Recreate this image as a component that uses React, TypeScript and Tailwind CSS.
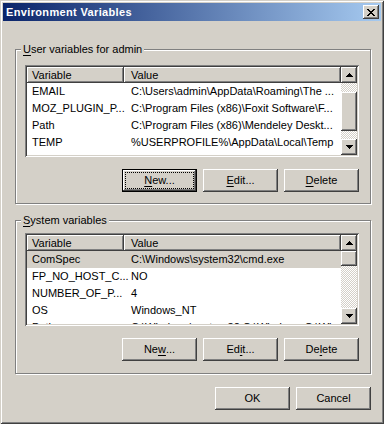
import React from "react";

const raised =
  "bg-[#d4d0c8] shadow-[inset_-1px_-1px_#404040,inset_1px_1px_#ffffff,inset_-2px_-2px_#808080,inset_2px_2px_#d4d0c8]";
const sunken =
  "shadow-[inset_1px_1px_#808080,inset_-1px_-1px_#ffffff,inset_2px_2px_#404040,inset_-2px_-2px_#d4d0c8]";
const etched = "border border-[#808080] shadow-[inset_1px_1px_#ffffff,1px_1px_#ffffff]";
const checker =
  "bg-[image:repeating-conic-gradient(#d4d0c8_0%_25%,#ffffff_0%_50%)] bg-[length:2px_2px]";

function Key({ children }: { children: React.ReactNode }) {
  return <span className="underline underline-offset-[2px]">{children}</span>;
}

function CloseGlyph() {
  const rows = ["11000011", "01100110", "00111100", "00011000", "00111100", "01100110", "11000011"];
  return (
    <svg width="8" height="7" viewBox="0 0 8 7" shapeRendering="crispEdges">
      {rows.flatMap((r, y) =>
        r.split("").map((c, x) => (c === "1" ? <rect key={`${x}-${y}`} x={x} y={y} width="1" height="1" fill="#000" /> : null))
      )}
    </svg>
  );
}

function Arrow({ down }: { down?: boolean }) {
  return (
    <svg width="7" height="4" viewBox="0 0 7 4" shapeRendering="crispEdges">
      <polygon points={down ? "0,0 7,0 3.5,4" : "3.5,0 7,4 0,4"} fill="#000" />
    </svg>
  );
}

function ScrollBar({ before, thumb }: { before: number; thumb: number }) {
  return (
    <div className="flex w-[16px] flex-col">
      <div className={`${raised} flex h-[16px] shrink-0 items-center justify-center`}>
        <Arrow />
      </div>
      <div className={`flex flex-1 flex-col ${checker}`}>
        <div className="shrink-0" style={{ height: before }} />
        <div className={`${raised} shrink-0`} style={{ height: thumb }} />
      </div>
      <div className={`${raised} flex h-[16px] shrink-0 items-center justify-center`}>
        <Arrow down />
      </div>
    </div>
  );
}

type Row = [string, string];

function ListView({
  rows,
  height,
  selected,
  before,
  thumb,
}: {
  rows: Row[];
  height: string;
  selected?: number;
  before: number;
  thumb: number;
}) {
  return (
    <div className={`${sunken} ${height} flex w-[334px] bg-white p-[2px]`}>
      <div className="flex min-w-0 flex-1 flex-col overflow-hidden">
        <div className="flex h-[16px] shrink-0">
          <div className={`${raised} flex w-[97px] items-center pl-[5px]`}>Variable</div>
          <div className={`${raised} flex flex-1 items-center pl-[7px]`}>Value</div>
        </div>
        {rows.map(([name, value], i) => (
          <div
            key={name}
            className={`flex h-[17px] shrink-0 items-center whitespace-nowrap ${i === selected ? "bg-[#d4d0c8]" : ""}`}
          >
            <div className="w-[97px] shrink-0 pl-[5px]">{name}</div>
            <div className="pl-[7px]">{value}</div>
          </div>
        ))}
      </div>
      <ScrollBar before={before} thumb={thumb} />
    </div>
  );
}

function Button({
  children,
  focused,
}: {
  children: React.ReactNode;
  focused?: boolean;
}) {
  if (focused) {
    return (
      <div className="h-[23px] w-[75px] border border-black">
        <div className={`${raised} h-full w-full p-[2px]`}>
          <div className="flex h-full w-full items-center justify-center border border-dotted border-black">
            {children}
          </div>
        </div>
      </div>
    );
  }
  return <div className={`${raised} flex h-[23px] w-[75px] items-center justify-center`}>{children}</div>;
}

function Group({
  label,
  className,
  children,
}: {
  label: React.ReactNode;
  className: string;
  children: React.ReactNode;
}) {
  return (
    <div className={`relative ml-[12px] w-[356px] ${etched} ${className}`}>
      <div className="absolute left-[5px] top-[-8px] bg-[#d4d0c8] px-[2px] leading-[14px]">{label}</div>
      {children}
    </div>
  );
}

export default function App() {
  const userRows: Row[] = [
    ["EMAIL", "C:\\Users\\admin\\AppData\\Roaming\\The ..."],
    ["MOZ_PLUGIN_P...", "C:\\Program Files (x86)\\Foxit Software\\F..."],
    ["Path", "C:\\Program Files (x86)\\Mendeley Deskt..."],
    ["TEMP", "%USERPROFILE%\\AppData\\Local\\Temp"],
    ["TMP", "%USERPROFILE%\\AppData\\Local\\Temp"],
  ];
  const systemRows: Row[] = [
    ["ComSpec", "C:\\Windows\\system32\\cmd.exe"],
    ["FP_NO_HOST_C...", "NO"],
    ["NUMBER_OF_P...", "4"],
    ["OS", "Windows_NT"],
    ["Path", "C:\\Windows\\system32;C:\\Windows;C:\\Wi..."],
  ];

  return (
    <div className="font-['Liberation_Sans',Arial,sans-serif] text-[11px] text-black">
      <div className="flex h-[424px] w-[384px] flex-col bg-[#d4d0c8] p-[3px] shadow-[inset_1px_1px_#d4d0c8,inset_-1px_-1px_#404040,inset_2px_2px_#ffffff,inset_-2px_-2px_#808080]">
        <div className="flex h-[18px] shrink-0 items-center justify-between bg-[linear-gradient(90deg,#0a246a,#a6caf0)] pl-[3px] pr-[2px]">
          <span className="font-bold tracking-[0.35px] text-white">Environment Variables</span>
          <div className={`${raised} flex h-[14px] w-[16px] items-center justify-center`}>
            <CloseGlyph />
          </div>
        </div>

        <Group
          className="mt-[28px] h-[155px] pl-[9px] pt-[15px]"
          label={
            <>
              <Key>U</Key>ser variables for admin
            </>
          }
        >
          <ListView rows={userRows} height="h-[92px]" before={9} thumb={39} />
          <div className="mt-[12px] flex w-[334px] justify-end gap-[6px]">
            <Button focused>
              <Key>N</Key>ew...
            </Button>
            <Button>
              <Key>E</Key>dit...
            </Button>
            <Button>
              <Key>D</Key>elete
            </Button>
          </div>
        </Group>

        <Group
          className="mt-[16px] h-[154px] pl-[9px] pt-[12px]"
          label={
            <>
              <Key>S</Key>ystem variables
            </>
          }
        >
          <ListView rows={systemRows} height="h-[93px]" selected={0} before={0} thumb={15} />
          <div className="mt-[12px] flex w-[334px] justify-end gap-[6px]">
            <Button>
              Ne<Key>w</Key>...
            </Button>
            <Button>
              Ed<Key>i</Key>t...
            </Button>
            <Button>
              De<Key>l</Key>ete
            </Button>
          </div>
        </Group>

        <div className="mt-[13px] flex justify-end gap-[6px] pr-[10px]">
          <Button>OK</Button>
          <Button>Cancel</Button>
        </div>
      </div>
    </div>
  );
}
